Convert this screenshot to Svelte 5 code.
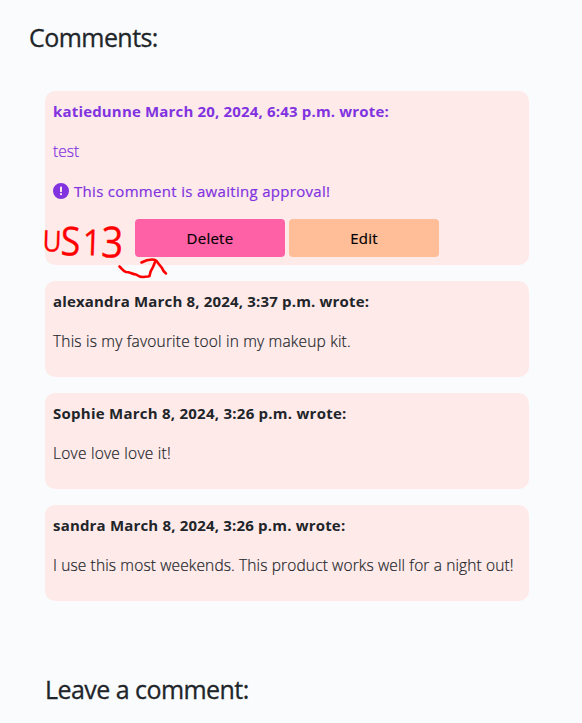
<script>
  const comments = [
    { head: 'katiedunne March 20, 2024, 6:43 p.m. wrote:', body: 'test', pending: true, hs: 0.17, bs: 0 },
    { head: 'alexandra March 8, 2024, 3:37 p.m. wrote:', body: 'This is my favourite tool in my makeup kit.', hs: 0.17, bs: 0.19 },
    { head: 'Sophie March 8, 2024, 3:26 p.m. wrote:', body: 'Love love love it!', hs: 0.25, bs: 0.24 },
    { head: 'sandra March 8, 2024, 3:26 p.m. wrote:', body: 'I use this most weekends. This product works well for a night out!', hs: 0.18, bs: 0.13 }
  ];
</script>

<main>
  <h3 class="title"><span>Comments:</span></h3>
  <section class="list">
    {#each comments as c}
      <article class:pending={c.pending}>
        <p class="head"><span style="letter-spacing: {c.hs}px">{c.head}</span></p>
        <p class="body"><span style="letter-spacing: {c.bs}px">{c.body}</span></p>
        {#if c.pending}
          <p class="notice">
            <svg width="16" height="16" viewBox="0 0 512 512" aria-hidden="true">
              <path fill="currentColor" fill-rule="evenodd" d="M256 0a256 256 0 1 0 0 512a256 256 0 1 0 0-512zm0 112c18 0 32 12 32 30v122c0 18-14 30-32 30s-32-12-32-30V142c0-18 14-30 32-30zm-34 244a34 34 0 1 1 68 0a34 34 0 1 1-68 0z" />
            </svg>
            <span>This comment is awaiting approval!</span>
          </p>
          <div class="actions">
            <button class="delete">Delete</button>
            <button class="edit">Edit</button>
          </div>
          <svg class="note" width="130" height="84" viewBox="0 0 130 84">
            <g transform="scale(.9 1)">
              <text><tspan x="2.500" y="51" font-size="29" rotate="2">U</tspan><tspan x="22.500" y="55" font-size="40" rotate="2">S</tspan><tspan x="47" y="55" font-size="36" rotate="2">1</tspan><tspan x="67.500" y="57" font-size="43" rotate="2">3</tspan></text>
            </g>
            <path d="M79.500 66.500C82 69 83 71 86 72C90 72 92 74 96 74.500C98 76 100 77 103 77L108 76.500L109.500 76C110 72 111 70 113 67L115.500 61M101.500 62.500C106 60 109 59.500 112 59.500C116 59.500 117 61 118 63L122 68C123 71 124 72 126 73.500" />
          </svg>
        {/if}
      </article>
    {/each}
  </section>
  <h3 class="leave"><span>Leave a comment:</span></h3>
</main>

<style>
  :global(body) { margin: 0; background: #f9fbfd; }
  main {
    box-sizing: border-box;
    height: 723px;
    padding: 20px 53px 0 45px;
    overflow: hidden;
    background: #f9fbfd;
    color: #212529;
    font: 400 16px/24px "Open Sans", "Noto Sans", sans-serif;
  }
  h3 {
    margin: 0;
    font-size: 25px;
    line-height: 34px;
    font-weight: 400;
    letter-spacing: -.55px;
    white-space: nowrap;
    -webkit-text-stroke: .3px currentColor;
  }
  .title { margin-left: -16px; }
  .list { display: flex; flex-direction: column; gap: 16px; margin-top: 37px; }
  article {
    position: relative;
    box-sizing: border-box;
    height: 96px;
    padding: 8px;
    border-radius: 10px;
    background: #ffeaea;
  }
  article.pending { height: 174px; color: #8133e0; }
  p { margin: 0 0 16px; white-space: nowrap; font-size: 15px; }
  .head { font-weight: 700; }
  .body { font-weight: 300; font-size: 15.5px; -webkit-text-stroke: .2px currentColor; }
  .notice {
    display: flex;
    align-items: center;
    gap: 5px;
    letter-spacing: .31px;
    -webkit-text-stroke: .2px currentColor;
  }
  .actions { display: flex; justify-content: center; gap: 4px; }
  button {
    width: 150px;
    height: 38px;
    padding: 0;
    border: 0;
    border-radius: 4px;
    color: #000;
    font: 400 15px/24px "Open Sans", "Noto Sans", sans-serif;
    letter-spacing: .25px;
    -webkit-text-stroke: .2px currentColor;
  }
  .delete { background: #ff61a6; }
  .edit { background: #ffbd98; }
  .note { position: absolute; left: -5px; top: 109px; z-index: 1; overflow: visible; pointer-events: none; }
  .note text { fill: #f00; stroke: #f00; stroke-width: .3; font-family: "Open Sans", sans-serif; }
  .note path { fill: none; stroke: #f00; stroke-width: 2.6; stroke-linecap: round; stroke-linejoin: round; }
  .leave { margin-top: 71px; }
</style>
